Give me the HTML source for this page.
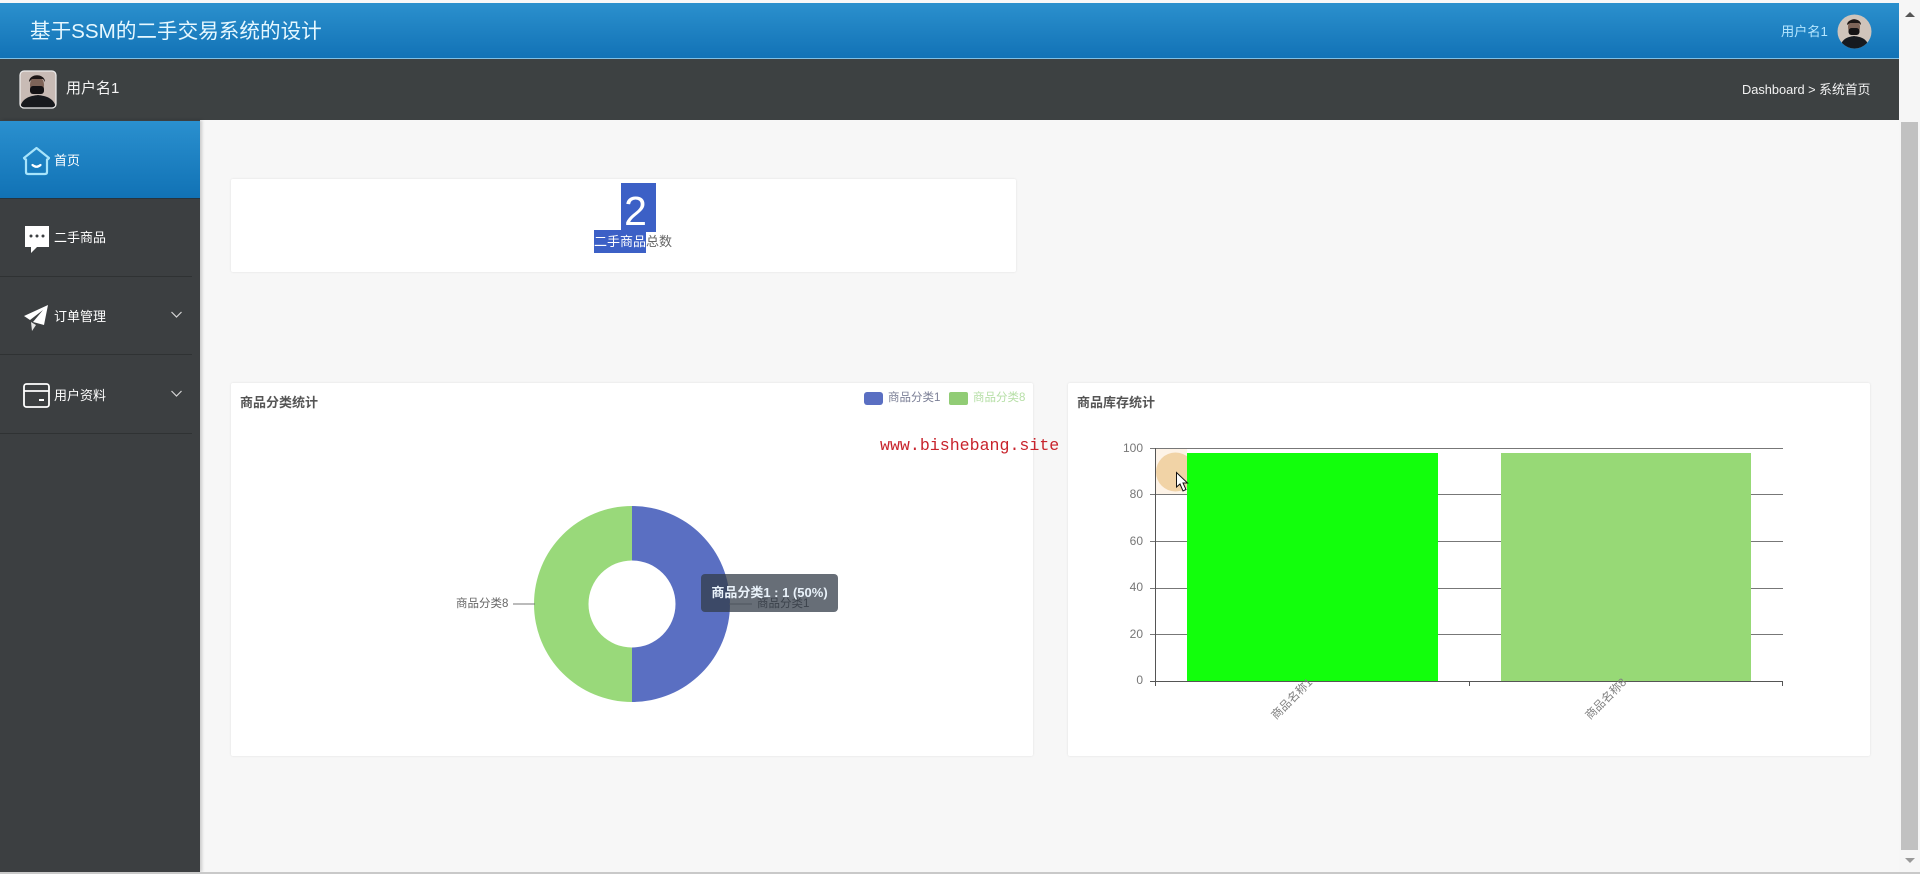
<!DOCTYPE html>
<html lang="zh">
<head>
<meta charset="utf-8">
<title>基于SSM的二手交易系统的设计</title>
<style>
html,body{margin:0;padding:0;width:1920px;height:874px;overflow:hidden;background:#f7f7f7;font-family:"Liberation Sans","Noto Sans CJK SC",sans-serif;}
#wrap{position:absolute;left:0;top:0;width:1920px;height:874px;overflow:hidden;filter:blur(.35px);}
.a{position:absolute;white-space:nowrap;}
#top{position:absolute;left:0;top:3px;width:1899px;height:55px;background:linear-gradient(#2b90cd,#1272b6);}
#topline{position:absolute;left:0;top:58px;width:1899px;height:1px;background:#7fc0e6;}
#bar{position:absolute;left:0;top:59px;width:1899px;height:61px;background:#3d4142;}
#side{position:absolute;left:0;top:120px;width:200px;height:752px;background:#3c3f41;box-shadow:2px 0 3px rgba(0,0,0,.18);}
#active{position:absolute;left:0;top:121px;width:200px;height:78px;background:linear-gradient(#2a90cf,#1172b5);border-bottom:1px solid #26343f;box-sizing:border-box;}
.sep{position:absolute;left:0;width:192px;height:1px;background:#2f3233;}
.m{color:#fff;font-size:13px;line-height:18px;}
.card{position:absolute;background:#fff;box-shadow:0 0 2px rgba(0,0,0,.1);border-radius:2px;}
#scroll{position:absolute;left:1899px;top:0;width:21px;height:872px;background:#f6f6f6;}
#thumb{position:absolute;left:1901px;top:122px;width:17px;height:728px;background:#c1c1c1;}
#bottom{position:absolute;left:0;top:872px;width:1920px;height:2px;background:#c9c9c9;}
</style>
</head>
<body>
<div id="wrap">
<div id="top"></div>
<div id="topline"></div>
<div id="bar"></div>
<div id="side"></div>
<div id="active"></div>
<div class="sep" style="top:276px"></div>
<div class="sep" style="top:354px"></div>
<div class="sep" style="top:433px"></div>

<div class="a" style="left:30px;top:18px;font-size:20.6px;line-height:28px;color:#e6f8ff;">基于SSM的二手交易系统的设计</div>
<div class="a" style="left:1781px;top:23px;font-size:13.2px;line-height:18px;color:#b5e6ff;">用户名1</div>
<svg class="a" style="left:1837px;top:14px" width="35" height="35" viewBox="0 0 35 35">
<defs><clipPath id="c1"><circle cx="17.5" cy="17.5" r="17"/></clipPath></defs>
<g clip-path="url(#c1)"><rect width="35" height="35" fill="#cfc4bb"/><path d="M3 35 C4 25 10 23 17 22 C25 23 31 25 32 35Z" fill="#161a20"/><ellipse cx="17" cy="13" rx="6" ry="8" fill="#7e6458"/><path d="M10 11C10 4 24 3 24 11L22 9H13Z" fill="#1c1615"/><rect x="11.500" y="14" width="11" height="7" rx="3" fill="#141214"/></g>
</svg>

<svg class="a" style="left:19px;top:70px" width="38" height="39" viewBox="0 0 38 39">
<defs><clipPath id="c2"><rect x="1" y="1" width="36" height="37" rx="4"/></clipPath></defs>
<g clip-path="url(#c2)"><rect width="38" height="39" fill="#c8bbb5"/><path d="M1 39 C2 28 11 26 19 25 C27 26 36 28 37 39Z" fill="#181a1e"/><ellipse cx="18" cy="15" rx="7" ry="9" fill="#7e6458"/><path d="M10 12C10 3 26 3 26 12L24 9H13Z" fill="#1c1615"/><rect x="11" y="16" width="14" height="8" rx="3" fill="#141214"/></g>
<rect x="1" y="1" width="36" height="37" rx="4" fill="none" stroke="#eee" stroke-width="1.2"/>
</svg>
<div class="a" style="left:66px;top:79px;font-size:15px;line-height:20px;color:#f4f4f4;">用户名1</div>
<div class="a" style="left:1742px;top:81px;font-size:12.8px;line-height:18px;color:#f2f2f2;">Dashboard &gt; 系统首页</div>

<!-- sidebar icons -->
<svg class="a" style="left:22px;top:146px" width="29" height="30" viewBox="0 0 29 30" fill="none" stroke="#a8e4fb" stroke-width="2.200" stroke-linejoin="round" stroke-linecap="round">
<path d="M14.500 2 L27 12 Q26 13.500 25 13.500 V26 Q25 28 23 28 H6 Q4 28 4 26 V13.500 Q3 13.500 2 12 Z"/>
<path d="M10.500 19 Q14.500 22.500 18.500 19" stroke="#fff"/>
</svg>
<div class="a m" style="left:54px;top:152px">首页</div>

<svg class="a" style="left:25px;top:226px" width="24" height="28" viewBox="0 0 24 28">
<path d="M0 0H24V21H12L6 27V21H0Z" fill="#fff"/>
<circle cx="6" cy="10" r="1.500" fill="#3c3f41"/><circle cx="12" cy="10" r="1.500" fill="#3c3f41"/><circle cx="18" cy="10" r="1.500" fill="#3c3f41"/>
</svg>
<div class="a m" style="left:54px;top:229px">二手商品</div>

<svg class="a" style="left:24px;top:305px" width="25" height="26" viewBox="0 0 25 26">
<path d="M24 0 L0 11 L6 15 L19 5 L9 17 L20 20Z" fill="#fff"/>
<path d="M7 17 L8 26 L12 20Z" fill="#e4e4e4"/>
</svg>
<div class="a m" style="left:54px;top:308px">订单管理</div>
<svg class="a" style="left:171px;top:311px" width="11" height="8" viewBox="0 0 11 8" fill="none" stroke="#d5d5d5" stroke-width="1.200"><path d="M.5 1 L5.500 6 L10.500 1"/></svg>

<svg class="a" style="left:23px;top:383px" width="27" height="25" viewBox="0 0 27 25" fill="none" stroke="#fff" stroke-width="1.800">
<rect x="1" y="1" width="25" height="23" rx="2.500"/><path d="M1 8H26"/><path d="M16 17H21" stroke-width="2"/>
</svg>
<div class="a m" style="left:54px;top:387px">用户资料</div>
<svg class="a" style="left:171px;top:390px" width="11" height="8" viewBox="0 0 11 8" fill="none" stroke="#d5d5d5" stroke-width="1.200"><path d="M.5 1 L5.500 6 L10.500 1"/></svg>

<!-- stat card -->
<div class="card" style="left:231px;top:179px;width:785px;height:93px;"></div>
<div class="a" style="left:621px;top:183px;width:35px;height:49px;background:#3c60c6;"></div>
<div class="a" style="left:594px;top:230px;width:52px;height:23px;background:#3c60c6;"></div>
<div class="a" style="left:621px;top:187px;width:25px;line-height:49px;text-align:center;font-size:41px;color:#fff;padding-left:0;margin-left:2px;">2</div>
<div class="a" style="left:594px;top:233px;font-size:13px;line-height:18px;color:#666;"><span style="color:#fff">二手商品</span>总数</div>

<!-- pie card -->
<div class="card" style="left:231px;top:383px;width:802px;height:373px;"></div>
<div class="a" style="left:240px;top:393.500px;font-size:13px;line-height:18px;font-weight:bold;color:#555;">商品分类统计</div>
<div class="a" style="left:864px;top:392px;width:19px;height:13px;border-radius:3px;background:#5a6fc2;"></div>
<div class="a" style="left:888px;top:390px;font-size:11.500px;line-height:17px;color:#7b7f96;">商品分类1</div>
<div class="a" style="left:949px;top:392px;width:19px;height:13px;border-radius:2px;background:#91cc75;"></div>
<div class="a" style="left:973px;top:390px;font-size:11.500px;line-height:17px;color:#b6dfa6;">商品分类8</div>

<svg class="a" style="left:440px;top:490px" width="420" height="230" viewBox="440 490 420 230">
<path d="M632 506 A98 98 0 0 1 632 702 L632 647.500 A43.500 43.500 0 0 0 632 560.500Z" fill="#5a6fc2"/>
<path d="M632 506 A98 98 0 0 0 632 702 L632 647.500 A43.500 43.500 0 0 1 632 560.500Z" fill="#99d97a"/>
<path d="M513 604H535" stroke="#777" stroke-width="1" fill="none"/>
<path d="M729 604H752" stroke="#999" stroke-width="1" fill="none"/>
</svg>
<div class="a" style="left:456px;top:595px;font-size:11.500px;line-height:18px;color:#666;">商品分类8</div>
<div class="a" style="left:757px;top:595px;font-size:11.500px;line-height:18px;color:#555;">商品分类1</div>
<div class="a" style="left:701px;top:574px;width:137px;height:38px;border-radius:4px;background:rgba(50,60,72,.74);color:#e9f2fa;font-size:13px;line-height:37px;text-align:center;font-weight:bold;">商品分类1 : 1 (50%)</div>

<div class="a" style="left:880px;top:436px;font-family:'Liberation Mono','DejaVu Sans Mono',monospace;font-size:16.600px;line-height:20px;color:#c8232c;">www.bishebang.site</div>

<!-- bar card -->
<div class="card" style="left:1068px;top:383px;width:802px;height:373px;"></div>
<div class="a" style="left:1077px;top:393.500px;font-size:13px;line-height:18px;font-weight:bold;color:#555;">商品库存统计</div>

<svg class="a" style="left:1100px;top:430px" width="700" height="300" viewBox="1100 430 700 300" font-family="Liberation Sans, Noto Sans CJK SC, sans-serif">
<g stroke="#777" stroke-width="1" fill="none">
<path d="M1150 448.500H1783M1150 494.500H1783M1150 541.500H1783M1150 588.500H1783M1150 634.500H1783"/>
</g>
<rect x="1156" y="449" width="31" height="45" fill="#fdf3e7"/>
<circle cx="1175.500" cy="472" r="19.500" fill="#f1d3a6"/>
<rect x="1187" y="453" width="251" height="228" fill="#12ff0c"/>
<rect x="1501" y="453" width="250" height="228" fill="#97d976"/>
<path d="M1155.500 448V686M1150 681.500H1783M1469.500 681V686M1782.500 681V686" stroke="#555" stroke-width="1" fill="none"/>
<g font-size="12" fill="#777" text-anchor="end">
<text x="1143" y="452">100</text><text x="1143" y="498">80</text><text x="1143" y="545">60</text><text x="1143" y="591">40</text><text x="1143" y="638">20</text><text x="1143" y="684">0</text>
</g>
<g font-size="11.500" fill="#808080">
<text transform="translate(1276,720) rotate(-45)">商品名称1</text>
<text transform="translate(1590,720) rotate(-45)">商品名称8</text>
</g>
<path d="M1176.500 472.500V487L1180 484L1183 491L1186 489.500L1183 483H1187.500Z" fill="#fff" stroke="#111" stroke-width="1"/>
</svg>

<div id="scroll"></div>
<div id="thumb"></div>
<svg class="a" style="left:1903px;top:10px" width="14" height="10" viewBox="0 0 14 10"><path d="M7 2L12 7H2Z" fill="#555"/></svg>
<svg class="a" style="left:1903px;top:855px" width="14" height="10" viewBox="0 0 14 10"><path d="M7 8L12 3H2Z" fill="#999"/></svg>
<div id="bottom"></div>
</div>
</body>
</html>
